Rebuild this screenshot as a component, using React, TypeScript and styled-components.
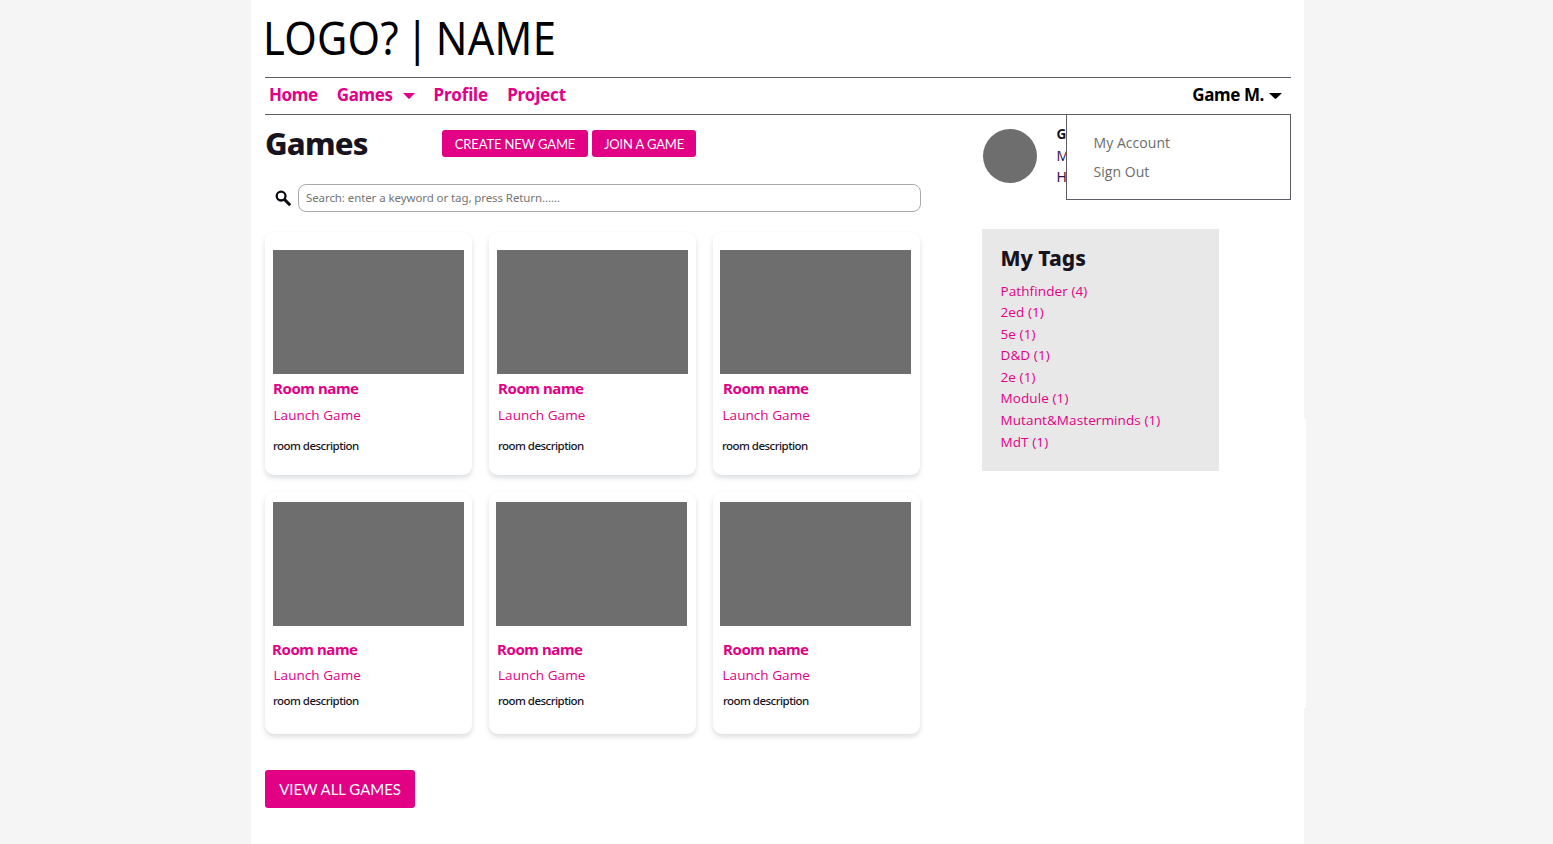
import React from "react";
import styled, { createGlobalStyle } from "styled-components";

const PINK = "#e20085";
const LINE = "#5f5b66";
const INK = "#17141f";

const GlobalStyle = createGlobalStyle`
  * { box-sizing: border-box; margin: 0; padding: 0; }
  body {
    background: #f5f5f5;
    font-family: "Noto Sans", "Open Sans", sans-serif;
    color: ${INK};
    overflow: hidden;
  }
  a { color: inherit; text-decoration: none; }
`;

const Page = styled.div`
  position: relative;
  width: 1053px;
  height: 844px;
  margin-left: 251px;
  padding: 0 13px 0 14px;
  background: #fff;

  &::after {
    content: "";
    position: absolute;
    left: 100%;
    top: 419px;
    width: 2px;
    height: 289px;
    background: #fff;
  }
`;

const Logo = styled.div`
  height: 77px;
  margin-left: -2.5px;
  font-size: 46px;
  line-height: 74px;
  letter-spacing: 0.3px;
  word-spacing: -4.6px;
  white-space: nowrap;
  transform: scaleX(0.905);
  transform-origin: 0 0;
  color: #000;
`;

const Nav = styled.nav`
  position: relative;
  display: flex;
  gap: 19px;
  height: 38px;
  padding: 0 9px 0 4px;
  border-top: 1px solid ${LINE};
  border-bottom: 1px solid ${LINE};
`;

const NavLink = styled.a<{ $spacing?: number; $user?: boolean }>`
  display: flex;
  align-items: center;
  height: 33px;
  font-size: 17px;
  font-weight: 700;
  line-height: 33px;
  letter-spacing: ${(p) => p.$spacing ?? 0}px;
  color: ${(p) => (p.$user ? "#000" : PINK)};
  margin-left: ${(p) => (p.$user ? "auto" : "0")};
`;

const CaretIcon = styled.svg<{ $gap: number; $width: number }>`
  width: ${(p) => p.$width}px;
  height: 6px;
  margin: 3px 0 0 ${(p) => p.$gap}px;
  fill: currentColor;
`;

const AccountMenu = styled.div`
  position: absolute;
  top: 36px;
  right: 0;
  z-index: 2;
  width: 225px;
  height: 86px;
  padding: 13px 0 0 26.5px;
  background: #fff;
  border: 1px solid ${LINE};
`;

const MenuItem = styled.a`
  display: block;
  font-family: "Open Sans", sans-serif;
  font-size: 14px;
  line-height: 29px;
  letter-spacing: 0.05px;
  color: #6c6c6c;
`;

const Columns = styled.div`
  display: grid;
  grid-template-columns: 656px 237px;
  column-gap: 61px;
`;

const TitleRow = styled.div`
  display: flex;
  height: 69px;
`;

const Title = styled.h1`
  width: 177px;
  font-size: 31px;
  font-weight: 800;
  line-height: 56px;
  letter-spacing: -0.8px;
`;

const Button = styled.button<{ $width: number; $large?: boolean }>`
  width: ${(p) => p.$width}px;
  height: ${(p) => (p.$large ? 38 : 27)}px;
  margin: ${(p) => (p.$large ? "36px 0 0" : "15px 4px 0 0")};
  border: 0;
  border-radius: 3px;
  background: ${PINK};
  color: #fff;
  font: 400 ${(p) => (p.$large ? 15 : 13)}px "Lato", sans-serif;
  letter-spacing: ${(p) => (p.$large ? -0.05 : -0.15)}px;
  white-space: nowrap;
`;

const SearchRow = styled.div`
  display: flex;
  align-items: center;
  height: 28px;
  padding-left: 10px;
`;

const SearchIcon = styled.svg`
  width: 17px;
  height: 17px;
  margin-right: 6px;
  fill: none;
  stroke: #0d0b12;
`;

const SearchBox = styled.input`
  flex: 1;
  height: 28px;
  padding: 0 7px 1px;
  border: 1px solid #aaa;
  border-radius: 8px;
  outline: 0;
  background: #fff;
  font: 400 11.5px "Noto Sans", sans-serif;
  letter-spacing: -0.09px;

  &::placeholder { color: #757575; opacity: 1; }
`;

const CardGrid = styled.div`
  display: grid;
  grid-template-columns: repeat(3, 207px);
  grid-template-rows: 243px 242px;
  gap: 17px;
  margin-top: 20px;
`;

const Card = styled.article<{ $top: number }>`
  padding-top: ${(p) => p.$top}px;
  border-radius: 9px;
  background: #fff;
  box-shadow: 0 3px 5px rgba(50, 60, 75, 0.17);
`;

const Thumb = styled.div<{ $left: number }>`
  width: 191px;
  height: 124px;
  margin-left: ${(p) => p.$left}px;
  background: #6e6e6e;
`;

const RoomName = styled.h2<{ $left: number; $low: boolean }>`
  margin: ${(p) => (p.$low ? 9 : 0)}px 0 0 ${(p) => p.$left}px;
  font-size: 15px;
  font-weight: 700;
  line-height: 29px;
  letter-spacing: -0.42px;
  color: ${PINK};
`;

const LaunchLink = styled.a<{ $left: number; $low: boolean }>`
  display: block;
  margin: ${(p) => (p.$low ? -1 : 0)}px 0 0 ${(p) => p.$left}px;
  font-family: "Open Sans", sans-serif;
  font-size: 13.5px;
  font-weight: 400;
  line-height: 25px;
  letter-spacing: 0.05px;
  color: ${PINK};
`;

const Description = styled.p<{ $left: number; $low: boolean }>`
  margin: ${(p) => (p.$low ? -1 : 4)}px 0 0 ${(p) => p.$left}px;
  font-size: 11.5px;
  font-weight: 500;
  line-height: 28px;
  letter-spacing: -0.54px;
`;

const Profile = styled.div`
  display: flex;
  height: 114px;
  padding: 14px 0 0 1px;
`;

const Avatar = styled.div`
  width: 54px;
  height: 54px;
  margin-right: 19.5px;
  border-radius: 50%;
  background: #6e6e6e;
`;

const ProfileLines = styled.div`
  margin-top: -5.5px;
  font-size: 14px;
  line-height: 21.3px;
  color: #35104a;
`;

const ProfileName = styled.strong`
  display: block;
  font-size: 13.5px;
  color: ${INK};
`;

const TagBox = styled.section`
  height: 242px;
  padding: 13px 18.5px 0;
  background: #e8e8e8;
`;

const TagTitle = styled.h2`
  font-size: 21px;
  font-weight: 800;
  line-height: 32px;
`;

const TagList = styled.ul`
  margin-top: 6.5px;
  list-style: none;
  font-family: "Open Sans", sans-serif;
  font-size: 13.5px;
  font-weight: 400;
  line-height: 21.6px;
  letter-spacing: 0.1px;
  color: ${PINK};
`;

const Caret = ({ gap, width = 12 }: { gap: number; width?: number }) => (
  <CaretIcon $gap={gap} $width={width} viewBox="0 0 12 6" preserveAspectRatio="none">
    <path d="M0 0h12L6.7 5.6a1 1 0 0 1-1.4 0z" />
  </CaretIcon>
);

const rooms = [
  { image: 8, name: 8, launch: 8.5, text: 8, low: false },
  { image: 8, name: 9, launch: 9, text: 9, low: false },
  { image: 7, name: 10, launch: 9.5, text: 9, low: false },
  { image: 8, name: 7, launch: 8.5, text: 8, low: true },
  { image: 7, name: 8, launch: 9, text: 9, low: true },
  { image: 7, name: 10, launch: 9.5, text: 10, low: true },
];

const tags = ["Pathfinder (4)", "2ed (1)", "5e (1)", "D&D (1)", "2e (1)", "Module (1)", "Mutant&Masterminds (1)", "MdT (1)"];

export default function App() {
  return (
    <>
      <GlobalStyle />
      <Page>
        <Logo>LOGO? | NAME</Logo>
        <Nav>
          <NavLink $spacing={-0.4}>Home</NavLink>
          <NavLink $spacing={-0.4}>Games<Caret gap={10} /></NavLink>
          <NavLink $spacing={-0.1}>Profile</NavLink>
          <NavLink $spacing={-0.15}>Project</NavLink>
          <NavLink $user $spacing={-0.4}>Game M.<Caret gap={5} width={13} /></NavLink>
          <AccountMenu>
            <MenuItem>My Account</MenuItem>
            <MenuItem>Sign Out</MenuItem>
          </AccountMenu>
        </Nav>
        <Columns>
          <main>
            <TitleRow>
              <Title>Games</Title>
              <Button $width={146}>CREATE NEW GAME</Button>
              <Button $width={104}>JOIN A GAME</Button>
            </TitleRow>
            <SearchRow>
              <SearchIcon viewBox="0 0 17 17">
                <circle cx="6.1" cy="6.1" r="4.4" strokeWidth="2.3" />
                <path d="M9.4 9.4L15.2 15.2" strokeWidth="3" />
              </SearchIcon>
              <SearchBox placeholder="Search: enter a keyword or tag, press Return......" />
            </SearchRow>
            <CardGrid>
              {rooms.map((room, i) => (
                <Card key={i} $top={room.low ? 10 : 18}>
                  <Thumb $left={room.image} />
                  <RoomName $left={room.name} $low={room.low}>Room name</RoomName>
                  <LaunchLink $left={room.launch} $low={room.low}>Launch Game</LaunchLink>
                  <Description $left={room.text} $low={room.low}>room description</Description>
                </Card>
              ))}
            </CardGrid>
            <Button $large $width={150}>VIEW ALL GAMES</Button>
          </main>
          <aside>
            <Profile>
              <Avatar />
              <ProfileLines>
                <ProfileName>G</ProfileName>
                <div>M</div>
                <div>H</div>
              </ProfileLines>
            </Profile>
            <TagBox>
              <TagTitle>My Tags</TagTitle>
              <TagList>
                {tags.map((tag) => (
                  <li key={tag}>{tag}</li>
                ))}
              </TagList>
            </TagBox>
          </aside>
        </Columns>
      </Page>
    </>
  );
}
